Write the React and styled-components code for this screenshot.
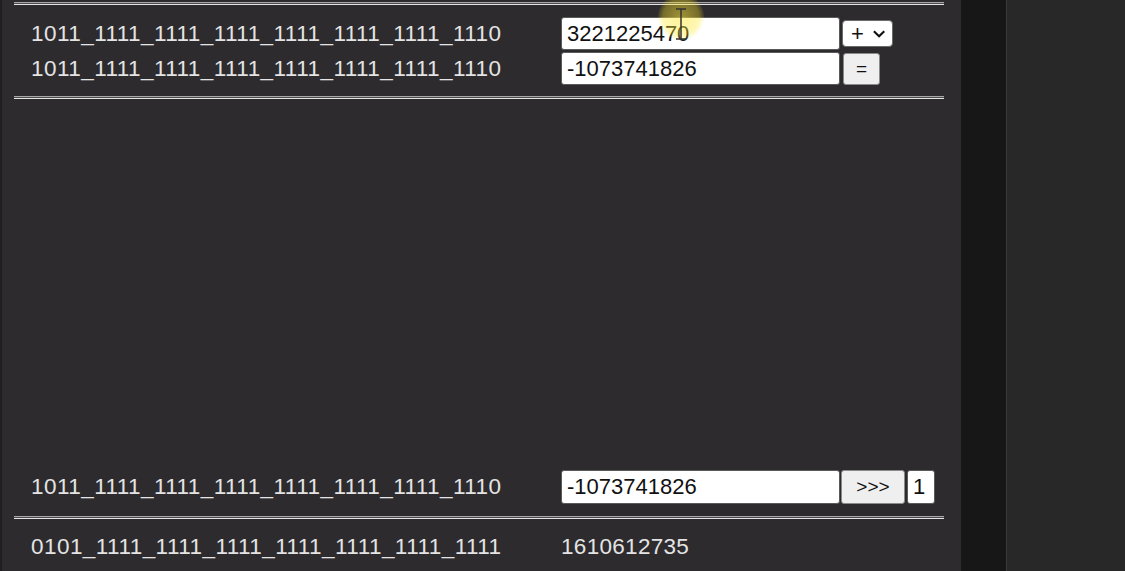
import React from 'react';
import styled, { createGlobalStyle } from 'styled-components';

const GlobalStyle = createGlobalStyle`
  html, body {
    margin: 0;
    padding: 0;
    height: 100%;
    overflow: hidden;
    background: #282828;
  }
`;

const Page = styled.div`
  display: flex;
  height: 571px;
  width: 1125px;
  overflow: hidden;
  font-family: 'Liberation Sans', Arial, sans-serif;
`;

const Panel = styled.div`
  position: relative;
  width: 961px;
  flex: none;
  background: #2d2b2e;
  border-left: 2px solid #1f1f20;
  padding: 2px 17px 0 12px;
  box-sizing: border-box;
  display: flex;
  flex-direction: column;
`;

const Gutter = styled.div`
  width: 45px;
  flex: none;
  background: #171717;
  border-right: 1px solid #3a3a3a;
`;

const Side = styled.div`
  flex: 1;
  background: #282828;
`;

const Rule = styled.div`
  height: 1px;
  flex: none;
  background: #4a4a4a;
  border-top: 1px solid #a8a8a8;
  border-bottom: 1px solid #e4e4e4;
  margin-top: ${p => p.$top || 0}px;
`;

const Block = styled.div`
  display: flex;
  flex-direction: column;
  gap: 2px;
  padding: ${p => p.$pad};
`;

const Row = styled.div`
  display: flex;
  align-items: center;
  height: ${p => p.$h || 33}px;
  padding-left: 17px;
`;

const Label = styled.span`
  width: 530px;
  flex: none;
  color: #e4e4e4;
  font-size: 22.5px;
  letter-spacing: 0.45px;
  white-space: nowrap;
`;

const Value = styled.span`
  color: #e4e4e4;
  font-size: 22.5px;
  letter-spacing: 0.3px;
`;

const Field = styled.input`
  width: ${p => p.$w || 279}px;
  height: ${p => p.$h || 33}px;
  box-sizing: border-box;
  border: 1px solid #5a5a5a;
  border-radius: 3px;
  background: #fff;
  color: #111;
  font-family: 'Liberation Sans', Arial, sans-serif;
  font-size: 22px;
  padding: 0 5px;
  margin: 0 0 0 ${p => p.$ml || 0}px;
  outline: none;
`;

const Select = styled.div`
  display: flex;
  align-items: center;
  gap: 8px;
  height: 27px;
  width: 51px;
  box-sizing: border-box;
  margin-left: 2px;
  padding: 0 6px 0 8px;
  background: #fff;
  border: 1px solid #6a6a6a;
  border-radius: 4px;
  color: #111;
  font-size: 22px;
`;

const Button = styled.button`
  height: ${p => p.$h || 32}px;
  width: ${p => p.$w}px;
  margin-left: ${p => p.$ml || 3}px;
  padding: 0;
  box-sizing: border-box;
  background: #efefef;
  border: 1px solid #8a8a8a;
  border-radius: 3px;
  color: #111;
  font-family: 'Liberation Sans', Arial, sans-serif;
  font-size: 19px;
`;

const Blank = styled.div`
  height: 371px;
  flex: none;
`;

const CursorGlow = styled.div`
  position: absolute;
  left: 656px;
  top: -6px;
  width: 46px;
  height: 46px;
  border-radius: 50%;
  background: radial-gradient(circle, rgba(255, 236, 60, 0.55) 0%, rgba(255, 230, 40, 0.35) 55%, rgba(255, 230, 40, 0) 75%);
  pointer-events: none;
`;

const Beam = styled.svg`
  position: absolute;
  left: 672px;
  top: 8px;
  pointer-events: none;
`;

const Chevron = () => (
  <svg width="15" height="10" viewBox="0 0 15 10">
    <polyline points="2,2 7.5,7.5 13,2" fill="none" stroke="#111" strokeWidth="2.2" />
  </svg>
);

const bits = '1011_1111_1111_1111_1111_1111_1111_1110';

export default function App() {
  return (
    <>
      <GlobalStyle />
      <Page>
        <Panel>
          <Rule />
          <Block $pad="12px 0 11px">
            <Row>
              <Label>{bits}</Label>
              <Field readOnly value="3221225470" />
              <Select>
                <span>+</span>
                <Chevron />
              </Select>
            </Row>
            <Row>
              <Label>{bits}</Label>
              <Field readOnly value="-1073741826" />
              <Button $w={37}>=</Button>
            </Row>
          </Block>
          <Rule />
          <Blank />
          <Row $h={34}>
            <Label>{bits}</Label>
            <Field readOnly value="-1073741826" $h={34} />
            <Button $w={64} $h={34} $ml={1}>&gt;&gt;&gt;</Button>
            <Field readOnly value="1" $w={28} $h={34} $ml={2} />
          </Row>
          <Rule $top={12} />
          <Block $pad="11px 0 0">
            <Row>
              <Label>0101_1111_1111_1111_1111_1111_1111_1111</Label>
              <Value>1610612735</Value>
            </Row>
          </Block>
          <CursorGlow />
          <Beam width="14" height="34" viewBox="0 0 14 34">
            <path d="M2 1 H12 M7 1 V31 M2 31 H12" stroke="#333" strokeWidth="1.5" fill="none" />
          </Beam>
        </Panel>
        <Gutter />
        <Side />
      </Page>
    </>
  );
}
